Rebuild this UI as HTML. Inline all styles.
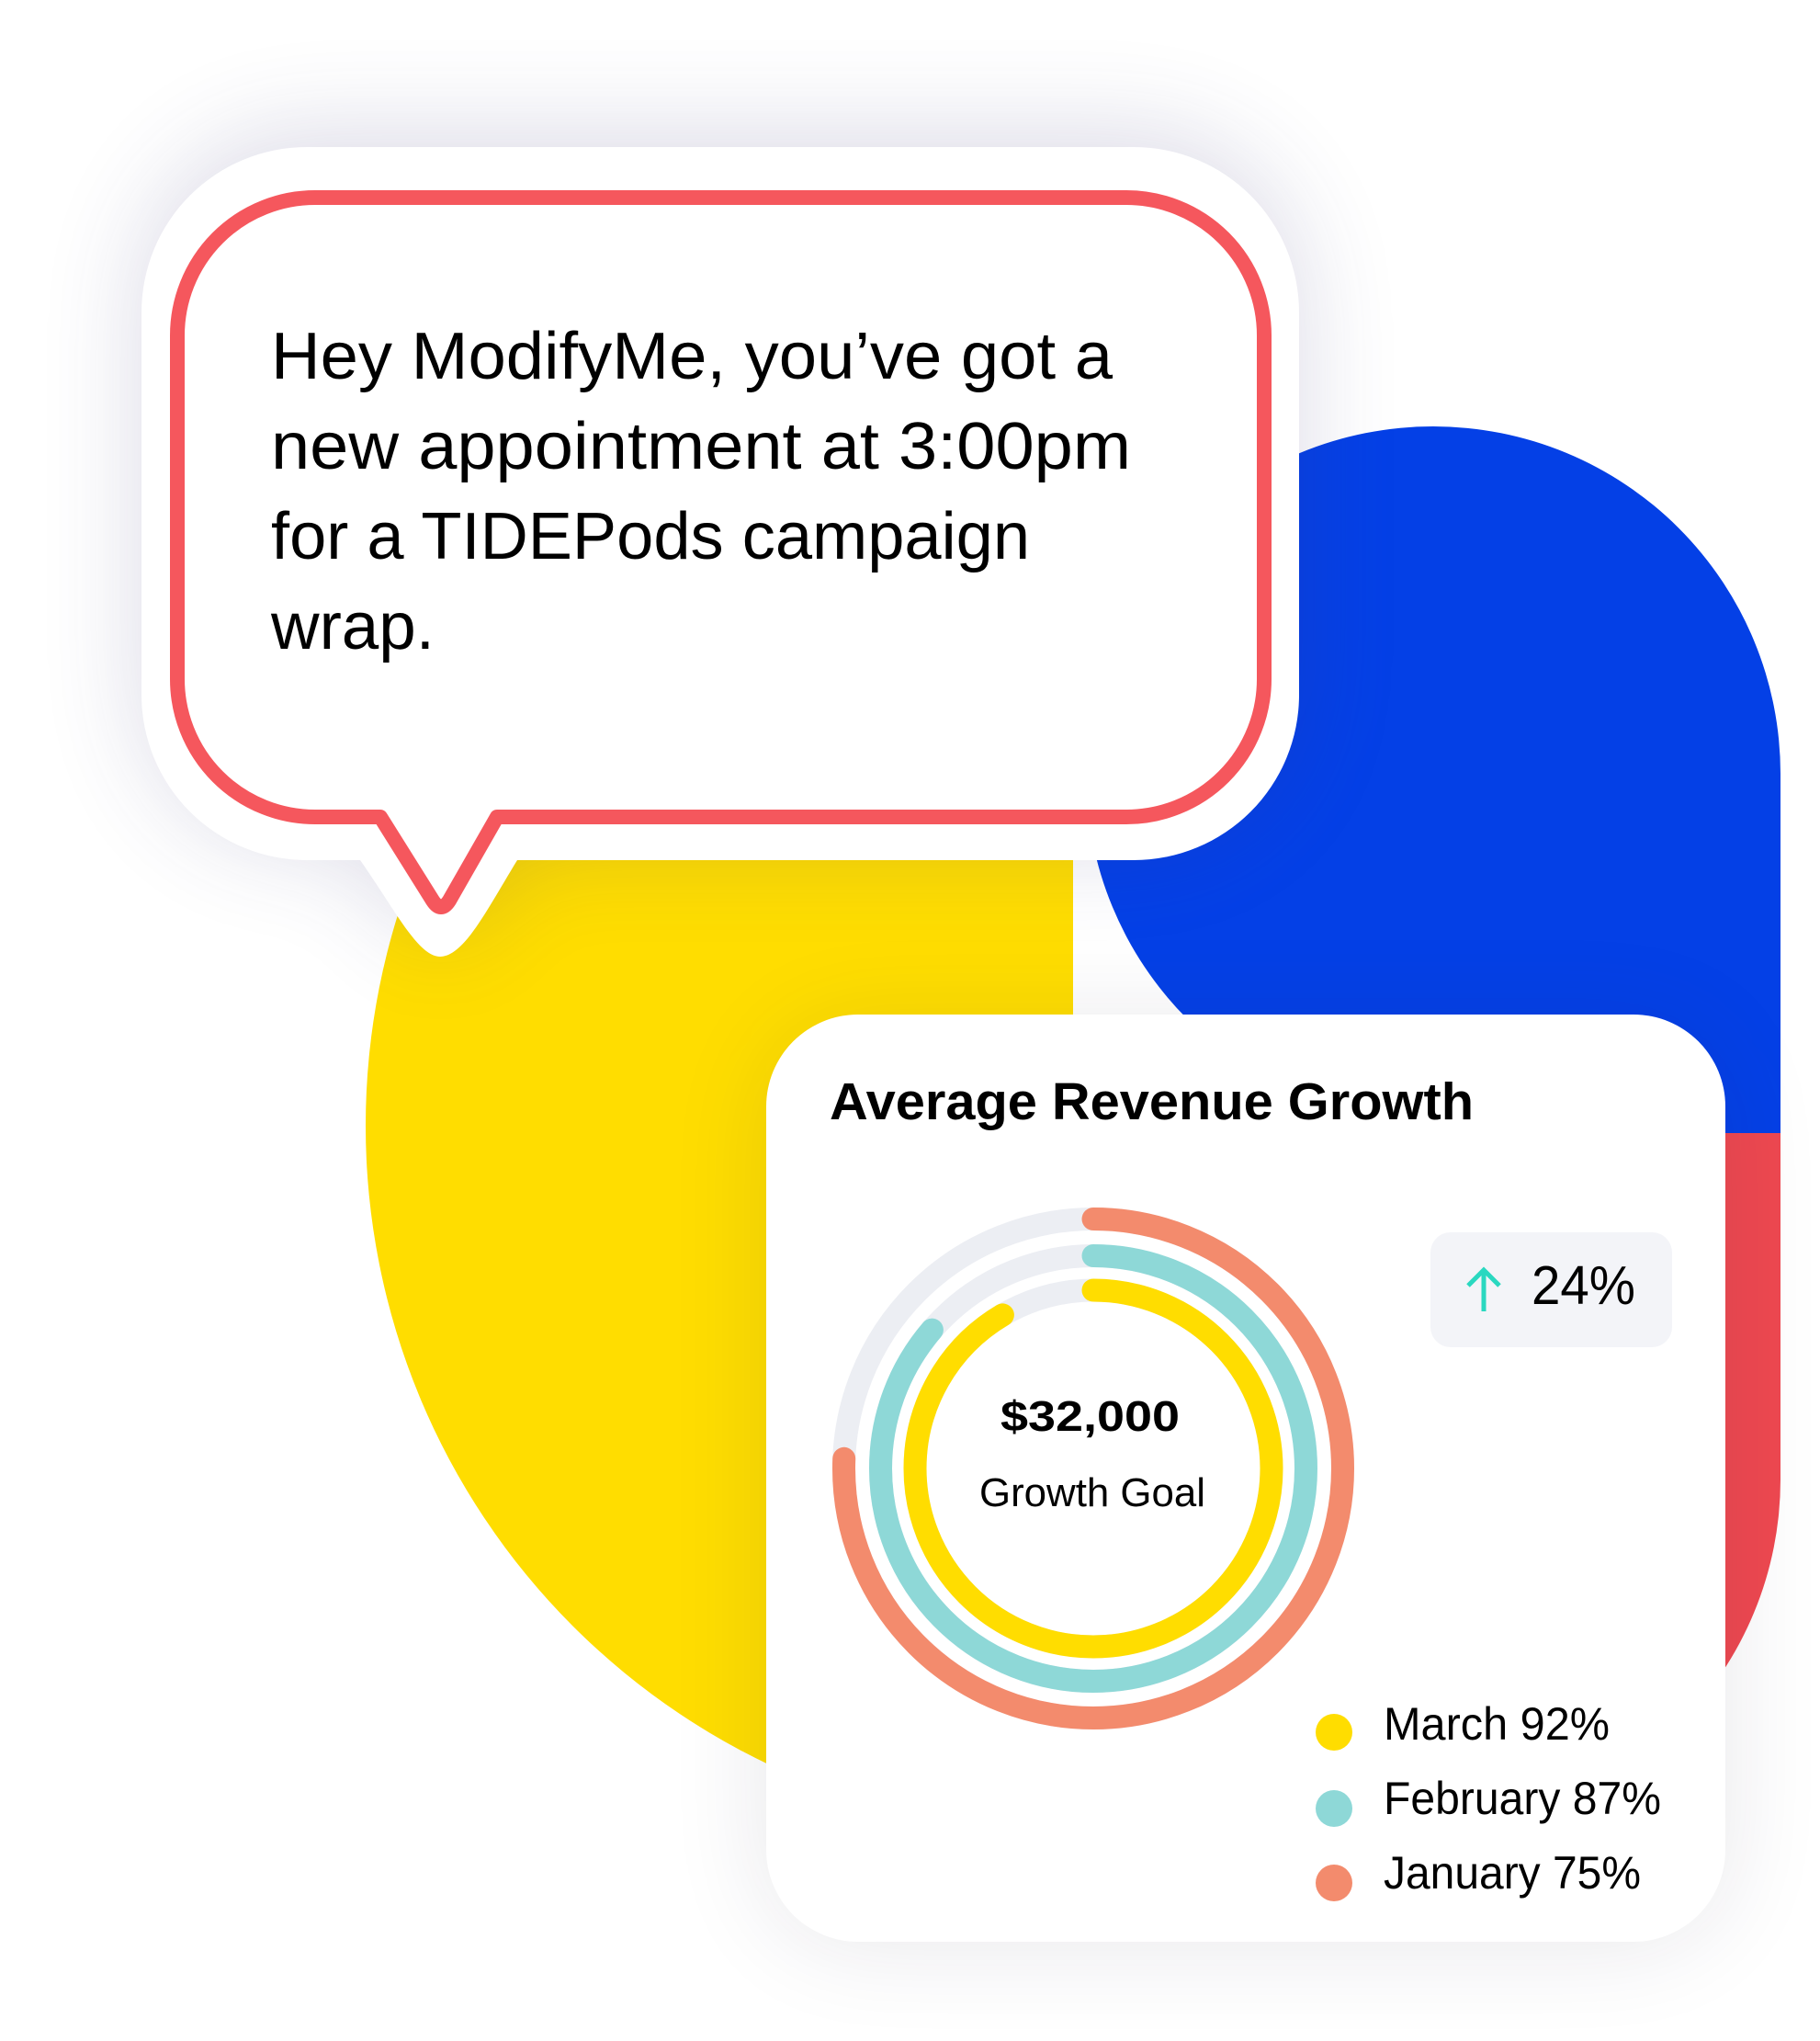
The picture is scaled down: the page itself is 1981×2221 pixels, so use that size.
<!DOCTYPE html>
<html><head><meta charset="utf-8"><style>
html,body{margin:0;padding:0;background:#fff;width:1981px;height:2221px;overflow:hidden}
svg{display:block}
text{font-family:"Liberation Sans",sans-serif;fill:#000}
</style></head><body>
<svg width="1981" height="2221" viewBox="0 0 1981 2221" xmlns="http://www.w3.org/2000/svg">
<defs>
<filter id="sh" x="-30%" y="-40%" width="160%" height="180%"><feGaussianBlur stdDeviation="55"/></filter>
<linearGradient id="yg" x1="0" y1="0" x2="0" y2="1">
<stop offset="0" stop-color="#d4bc18"/><stop offset="0.12" stop-color="#f2d505"/><stop offset="0.25" stop-color="#ffdd00"/><stop offset="1" stop-color="#ffdd00"/>
</linearGradient>
<clipPath id="stad"><circle cx="1560" cy="842" r="378"/><rect x="1560" y="842" width="378" height="768"/><circle cx="1560" cy="1610" r="378"/></clipPath>
</defs>

<path d="M1168,455 A770,770 0 0 0 1168,1995 Z" fill="url(#yg)"/>
<g clip-path="url(#stad)">
<rect x="1181" y="459" width="762" height="780" fill="#0440e6"/>
<rect x="1181" y="1233" width="762" height="800" fill="#ee4850"/>
</g>

<path d="M334,160 L1234,160 A180,180 0 0 1 1414,340 L1414,756 A180,180 0 0 1 1234,936 L563,936 C530,990 505,1041 479,1041 C455,1041 430,990 392,936 L334,936 A180,180 0 0 1 154,756 L154,340 A180,180 0 0 1 334,160 Z" fill="#3c3678" opacity="0.18" filter="url(#sh)" transform="translate(0,-14)"/>
<path d="M334,160 L1234,160 A180,180 0 0 1 1414,340 L1414,756 A180,180 0 0 1 1234,936 L563,936 C530,990 505,1041 479,1041 C455,1041 430,990 392,936 L334,936 A180,180 0 0 1 154,756 L154,340 A180,180 0 0 1 334,160 Z" fill="#fff"/>
<path d="M343,215 L1226,215 A150,150 0 0 1 1376,365 L1376,739 A150,150 0 0 1 1226,889 L541,889 L489,980 Q480,994 471,980 L414,889 L343,889 A150,150 0 0 1 193,739 L193,365 A150,150 0 0 1 343,215 Z" fill="#fff" stroke="#f5575d" stroke-width="16" stroke-linejoin="round"/>

<text x="295" y="412" font-size="72" textLength="916" lengthAdjust="spacingAndGlyphs">Hey ModifyMe, you’ve got a</text>
<text x="295" y="510" font-size="72" textLength="936" lengthAdjust="spacingAndGlyphs">new appointment at 3:00pm</text>
<text x="295" y="608" font-size="72" textLength="826" lengthAdjust="spacingAndGlyphs">for a TIDEPods campaign</text>
<text x="295" y="706" font-size="72" textLength="178" lengthAdjust="spacingAndGlyphs">wrap.</text>

<rect x="834" y="1115" width="1044" height="1000" rx="100" fill="#28243a" opacity="0.10" filter="url(#sh)"/>
<rect x="834" y="1104" width="1044" height="1009" rx="100" fill="#fff"/>

<text x="903" y="1218" font-size="57" font-weight="bold" textLength="701" lengthAdjust="spacingAndGlyphs">Average Revenue Growth</text>

<g fill="none" stroke-width="25" stroke-linecap="round" transform="rotate(-90 1190 1598)">
<circle cx="1190" cy="1598" r="271.5" stroke="#eceef3"/>
<circle cx="1190" cy="1598" r="231.5" stroke="#eceef3"/>
<circle cx="1190" cy="1598" r="194" stroke="#eceef3"/>
<circle cx="1190" cy="1598" r="271.5" stroke="#f38b6d" stroke-dasharray="1290 2000"/>
<circle cx="1190" cy="1598" r="231.5" stroke="#8ed8d7" stroke-dasharray="1255 2000"/>
<circle cx="1190" cy="1598" r="194" stroke="#ffdd00" stroke-dasharray="1115 2000"/>
</g>

<text x="1089" y="1557" font-size="46" font-weight="bold" textLength="195" lengthAdjust="spacingAndGlyphs">$32,000</text>
<text x="1066" y="1639" font-size="44" textLength="246" lengthAdjust="spacingAndGlyphs">Growth Goal</text>

<rect x="1557" y="1341" width="263" height="125" rx="22" fill="#f3f4f8"/>
<g stroke="#2ad8c0" stroke-width="5" fill="none">
<line x1="1615" y1="1381" x2="1615" y2="1427"/>
<polyline points="1598,1399 1615,1382 1632,1399"/>
</g>
<text x="1667" y="1419" font-size="59" textLength="113" lengthAdjust="spacingAndGlyphs">24%</text>

<circle cx="1452" cy="1885" r="20" fill="#ffdd00"/>
<circle cx="1452" cy="1968" r="20" fill="#8ed8d7"/>
<circle cx="1452" cy="2049" r="20" fill="#f38b6d"/>
<text x="1506" y="1893" font-size="50" textLength="246" lengthAdjust="spacingAndGlyphs">March 92%</text>
<text x="1506" y="1974" font-size="50" textLength="302" lengthAdjust="spacingAndGlyphs">February 87%</text>
<text x="1506" y="2055" font-size="50" textLength="280" lengthAdjust="spacingAndGlyphs">January 75%</text>
</svg>
</body></html>
